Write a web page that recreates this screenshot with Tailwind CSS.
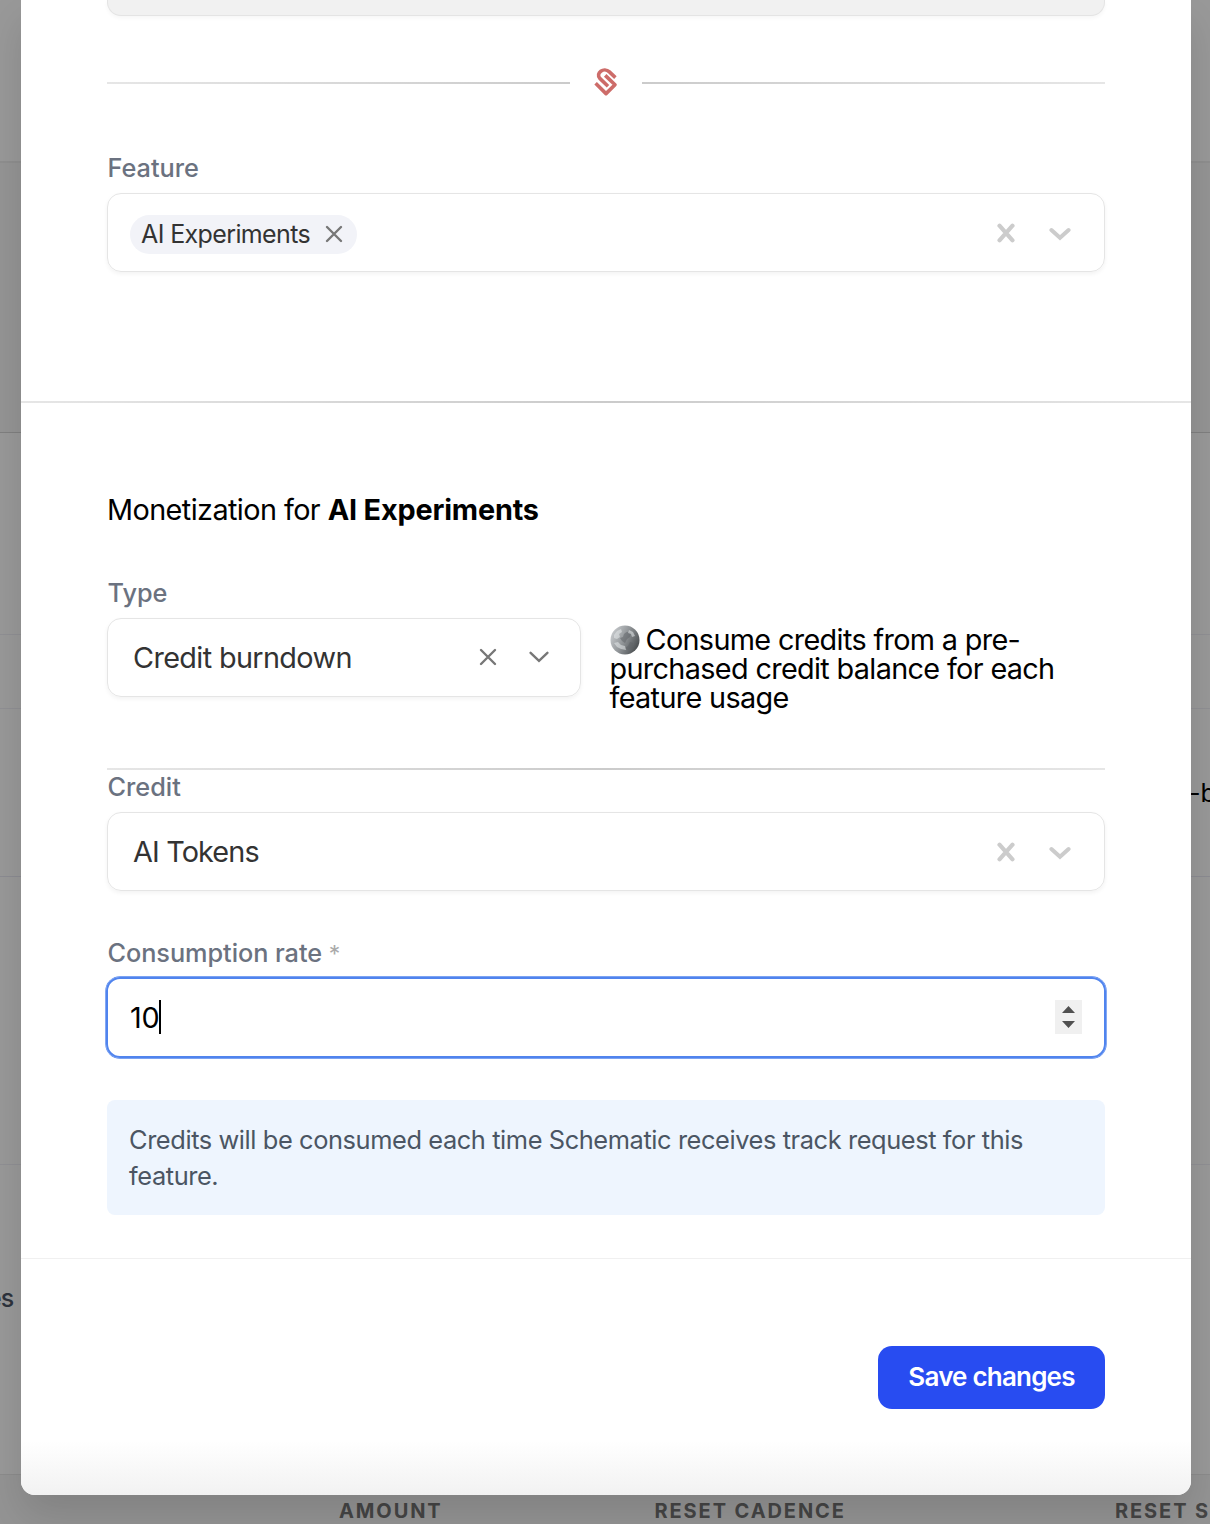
<!DOCTYPE html>
<html lang="en">
<head>
<meta charset="utf-8">
<title>Edit entitlement</title>
<script src="https://cdn.jsdelivr.net/npm/@tailwindcss/browser@4"></script>
</head>
<body class="relative h-[1524px] w-[1210px] overflow-hidden bg-[#999999] font-[Inter,sans-serif] text-black">

<!-- Dimmed page behind the dialog -->
<div class="flex h-full w-full flex-col overflow-hidden">
  <div class="h-[163px] border-b-2 border-[#8f8f8f]"></div>
  <div class="h-[270px] border-b border-[#808080] bg-[#959595]"></div>
  <div class="h-[202px] border-b border-[#909094]"></div>
  <div class="h-[74px] border-b border-[#909094]"></div>
  <div class="flex h-[168px] justify-end border-b border-[#8c8c92]"><span class="mt-[68px] h-[32px] w-[21px] overflow-hidden whitespace-nowrap text-[25px] leading-[32px]">-b</span></div>
  <div class="h-[288px] border-b border-[#909094]"></div>
  <div class="flex h-[310px] border-b border-[#8c8c8c]"><span class="mt-[117px] flex h-[32px] w-[13.5px] justify-end text-[25px] font-medium leading-[32px] tracking-[-0.8px] text-[#2e333d]">es</span></div>
  <div class="flex flex-1 items-start bg-[#949494] pt-[24px] text-[20px] font-bold leading-[24px] tracking-[1.9px] text-[#454545]">
    <span class="ml-[339px] w-[315.5px] shrink-0">AMOUNT</span><span class="w-[460.5px] shrink-0">RESET CADENCE</span><span class="shrink-0 whitespace-nowrap">RESET S</span>
  </div>
</div>

<!-- Dialog -->
<main class="absolute left-[21px] top-0 flex h-[1495px] w-[1170px] flex-col rounded-b-[14px] bg-white shadow-[0_20px_40px_rgba(0,0,0,0.13)]">
  <section class="flex h-[401px] flex-col px-[86px]">
    <div class="h-[16px] rounded-b-[14px] border border-t-0 border-[#e4e4e4] bg-[#f1f1f1] shadow-[0_2px_4px_rgba(0,0,0,0.04)]"></div>
    <div class="mt-[49px] flex h-[36px] items-center">
      <div class="h-[2px] flex-1 bg-linear-to-r from-[#e6e6e6] to-[#cbcbcb]"></div>
      <div class="flex w-[72px] justify-center">
        <svg class="mb-[3px] h-[30px] w-[24px]" viewBox="0 0 24 30" fill="none" stroke="#cd6c69" stroke-width="3.6" stroke-linejoin="round"><path d="M21.4 10.6 15.4 4.9C9.8-.4 1.3 6.2 5.8 11.4L14 19.2M1.6 16.3 12 26.6 21 17.7 11.2 8.4"/></svg>
      </div>
      <div class="h-[2px] flex-1 bg-linear-to-r from-[#cbcbcb] to-[#e6e6e6]"></div>
    </div>
    <label class="mt-[51px] h-[41px] pl-[0.5px] text-[25.3px] font-medium leading-[32px] text-[#6b7280]">Feature</label>
    <div class="flex h-[79px] items-center rounded-[14px] border border-[#e5e5e5] pl-[22px] shadow-[0_2px_4px_rgba(0,0,0,0.05)]">
      <div class="mt-[3px] flex h-[39px] w-[227px] items-center rounded-full bg-[#f2f3f8] pl-[11px] text-[25px] tracking-[-0.62px] text-[#333]">
        <span class="w-[184px] whitespace-nowrap pt-[2px]">AI Experiments</span>
        <svg class="h-[18px] w-[18px]" viewBox="0 0 18 18" fill="none" stroke="#777" stroke-width="2.4" stroke-linecap="round"><path d="m2 2 14 14M16 2 2 16"/></svg>
      </div>
      <svg class="ml-auto mr-[34px] h-[20px] w-[18px]" viewBox="0 0 18 20" fill="none" stroke="#ccc" stroke-width="4.2" stroke-linecap="round"><path d="m2.5 2.7 13 14.6m0-14.6-13 14.6"/></svg>
      <svg class="mr-[33px] mt-[2px] h-[14px] w-[22px]" viewBox="0 0 22 14" fill="none" stroke="#ccc" stroke-width="4" stroke-linecap="round"><path d="m2.4 3 8.6 7.8L19.6 3"/></svg>
    </div>
  </section>
  <div class="h-[2px] shrink-0 bg-linear-to-r from-[#e6e6e6] via-[#cbcbcb] to-[#e6e6e6]"></div>

  <section class="flex h-[855px] flex-col px-[86px]">
    <h2 class="mt-[89px] h-[36px] text-[28.8px] leading-[36px] tracking-[-0.57px]">Monetization for <b class="tracking-[-0.17px]">AI Experiments</b></h2>
    <label class="mt-[49px] h-[41px] pl-[0.5px] text-[25.3px] font-medium leading-[32px] text-[#6b7280]">Type</label>
    <div class="flex h-[150px] items-start">
      <div class="flex h-[79px] w-[474px] items-center rounded-[14px] border border-[#e5e5e5] pl-[25px] shadow-[0_2px_4px_rgba(0,0,0,0.05)]">
        <span class="whitespace-nowrap text-[28.8px] tracking-[-0.63px] text-[#333]">Credit burndown</span>
        <svg class="-mt-px ml-auto mr-[31.5px] h-[18px] w-[18px]" viewBox="0 0 18 18" fill="none" stroke="#777" stroke-width="2.4" stroke-linecap="round"><path d="m2 2 14 14M16 2 2 16"/></svg>
        <svg class="-mt-[2px] mr-[31.5px] h-[12px] w-[20px]" viewBox="0 0 20 12" fill="none" stroke="#777" stroke-width="2.4" stroke-linecap="round"><path d="m1.6 1.8 8.4 8 8.4-8"/></svg>
      </div>
      <p class="ml-[28.5px] mt-[7px] whitespace-nowrap text-[28.8px] leading-[29px] tracking-[-0.65px]"><svg class="-mb-[2px] mr-[6px] inline-block h-[30px] w-[30px] align-top" viewBox="0 0 30 30"><defs><linearGradient id="moon" x1="0" y1=".25" x2="1" y2=".75"><stop offset="0" stop-color="#c9cccf"/><stop offset=".45" stop-color="#93979a"/><stop offset="1" stop-color="#44484b"/></linearGradient></defs><circle cx="15" cy="15" r="14.5" fill="url(#moon)"/><path d="M14 9q4-4 7-1l-1 4-3 2-2 4-3-2-2-3 3-1zM20 17l3 1-1 5-4 2-3-2 3-2z" fill="#5d6265" opacity=".5"/><path d="M4 10l3-4 4-2 1 3-3 2 1 3-3 2-3-1zM4 18l4-1 3 3 4 1 1 4-5-1-4-2zM19 5l4 2 2 4-3 1-1-3-3-1z" fill="#e6e9eb" opacity=".55"/></svg>Consume credits from a pre-<br>purchased credit balance for each<br>feature usage</p>
    </div>
    <div class="h-[2px] bg-linear-to-r from-[#e6e6e6] via-[#cbcbcb] to-[#e6e6e6]"></div>
    <label class="mt-[1px] h-[41px] pl-[0.5px] text-[25.3px] font-medium leading-[32px] text-[#6b7280]">Credit</label>
    <div class="flex h-[79px] items-center rounded-[14px] border border-[#e5e5e5] pl-[25px] shadow-[0_2px_4px_rgba(0,0,0,0.05)]">
      <span class="whitespace-nowrap text-[28.8px] tracking-[-0.85px] text-[#333]">AI Tokens</span>
      <svg class="ml-auto mr-[34px] h-[20px] w-[18px]" viewBox="0 0 18 20" fill="none" stroke="#ccc" stroke-width="4.2" stroke-linecap="round"><path d="m2.5 2.7 13 14.6m0-14.6-13 14.6"/></svg>
      <svg class="mr-[33px] mt-[2px] h-[14px] w-[22px]" viewBox="0 0 22 14" fill="none" stroke="#ccc" stroke-width="4" stroke-linecap="round"><path d="m2.4 3 8.6 7.8L19.6 3"/></svg>
    </div>
    <label class="mt-[46px] h-[40px] pl-[0.5px] text-[25.3px] font-medium leading-[32px] tracking-[-0.06px] text-[#6b7280]">Consumption rate <span class="text-[23px] font-normal text-[#aaa]">*</span></label>
    <div class="-mx-px flex h-[81px] items-center rounded-[14px] border-2 border-[#5084ee] px-[22px] shadow-[0_0_0_0.7px_#5084ee]">
      <span class="w-[29px] whitespace-nowrap text-[28.8px] tracking-[-0.2px]">10</span><span class="-mt-px h-[34px] w-[2px] bg-black"></span>
      <div class="-mt-px ml-auto flex h-[34px] w-[27px] flex-col items-center justify-center bg-[#f0f0f0]">
        <svg class="h-[22px] w-[13px]" viewBox="0 0 13 22" fill="#505050"><path d="M0 7 6.5 0 13 7zM0 15h13l-6.5 7z"/></svg>
      </div>
    </div>
    <div class="mt-[42px] h-[115px] whitespace-nowrap rounded-[8px] bg-[#eef5fe] pl-[22px] pt-[22px] text-[25.4px] leading-[36px] tracking-[-0.41px] text-[#4b5563]">Credits will be consumed each time Schematic receives track request for this<br>feature.</div>
  </section>

  <footer class="flex flex-1 items-start justify-end rounded-b-[14px] border-t border-[#f0f0f0] bg-linear-to-b from-white from-77% to-[#f2f2f2] pr-[86px] pt-[87px]">
    <button class="h-[63px] w-[227px] whitespace-nowrap rounded-[14px] bg-[#284cf1] pb-[2px] text-[26px] font-semibold tracking-[-0.8px] text-white">Save changes</button>
  </footer>
</main>
</body>
</html>
